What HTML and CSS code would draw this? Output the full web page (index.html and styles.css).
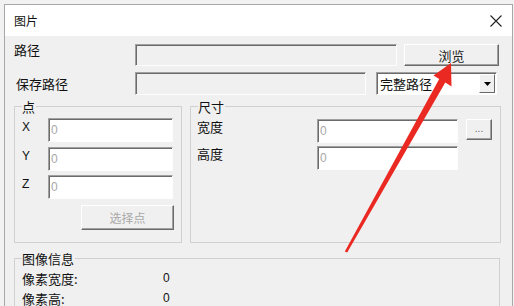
FILE: index.html
```html
<!DOCTYPE html>
<html lang="zh">
<head>
<meta charset="utf-8">
<link rel="stylesheet" href="styles.css">
</head>
<body>
<div class="window">
  <div class="titlebar">
    <span class="title">图片</span>
    <svg class="close" width="12" height="12" viewBox="0 0 12 12"><path d="M0.5 0.5 L11.5 11.5 M11.5 0.5 L0.5 11.5" stroke="#222" stroke-width="1.1" fill="none"/></svg>
  </div>
  <div class="content">
    <div class="row row1">
      <span class="label">路径</span>
      <div class="field readonly path1"></div>
      <div class="btn browse">浏览</div>
    </div>
    <div class="row row2">
      <span class="label label2">保存路径</span>
      <div class="field readonly path2"></div>
      <div class="field combo"><span class="combo-text">完整路径</span><span class="combo-btn"><svg width="7" height="4" viewBox="0 0 7 4"><path d="M0 0 H7 L3.5 4 Z" fill="#000"/></svg></span></div>
    </div>
    <div class="groups">
      <div class="group g-point">
        <span class="legend">点</span>
        <div class="pgrid">
          <span class="axis">X</span><div class="field white w125"><span class="ph">0</span></div>
          <span class="axis">Y</span><div class="field white w125"><span class="ph">0</span></div>
          <span class="axis">Z</span><div class="field white w125"><span class="ph">0</span></div>
        </div>
        <div class="btn disabled pick">选择点</div>
      </div>
      <div class="group g-size">
        <span class="legend">尺寸</span>
        <div class="srow">
          <span class="slabel">宽度</span><div class="field white w141"><span class="ph">0</span></div><div class="btn dots">...</div>
        </div>
        <div class="srow">
          <span class="slabel">高度</span><div class="field white w141"><span class="ph">0</span></div>
        </div>
      </div>
    </div>
    <div class="group g-info">
      <span class="legend">图像信息</span>
      <div class="irow"><span class="ilabel">像素宽度:</span><span class="ival">0</span></div>
      <div class="irow"><span class="ilabel">像素高:</span><span class="ival">0</span></div>
    </div>
  </div>
</div>
<svg class="arrow" width="514" height="306" viewBox="0 0 514 306">
  <polygon fill="#ea2a22" points="451,63 451.5,86.5 445.3,82.5 347.2,252.6 344.8,251.4 439.2,79 433.5,75.5"/>
</svg>
</body>
</html>
```
FILE: styles.css
```css
html, body {
  margin: 0;
  padding: 0;
}
body {
  background: #f2f2f2;
  width: 514px;
  height: 306px;
  overflow: hidden;
  position: relative;
  font-family: "Noto Sans CJK SC", "Noto Sans", sans-serif;
  font-size: 13px;
  color: #111;
}
.window {
  margin: 4px 1px 0 4px;
  border: 1px solid #a8a8a8;
  border-bottom: none;
  background: #f0f0f0;
  height: 301px;
  overflow: hidden;
}
.titlebar {
  height: 31px;
  background: #fff;
  display: flex;
  align-items: center;
  justify-content: space-between;
  padding: 0 10px 0 9px;
}
.title {
  font-size: 12px;
  line-height: 16px;
}
.close {
  display: block;
  margin-top: 1px;
}
.content {
  padding: 8px 0 0 9px;
}
.row {
  display: flex;
  align-items: stretch;
}
.row1 {
  height: 22px;
}
.row2 {
  height: 23px;
  margin-top: 6px;
}
.label {
  width: 121px;
  line-height: 14px;
  margin-top: -1px;
}
.label2 {
  width: 119px;
  padding-left: 2px;
  line-height: 22px;
  margin-top: 1px;
}
.field {
  box-sizing: border-box;
  border-top: 1px solid #a0a0a0;
  border-left: 1px solid #a0a0a0;
  border-right: 1px solid #fdfdfd;
  border-bottom: 1px solid #fdfdfd;
  box-shadow: inset 1px 1px 0 #6b6b6b;
}
.readonly {
  background: #f0f0f0;
}
.white {
  background: #fff;
}
.path1 {
  width: 262px;
}
.path2 {
  width: 231px;
  margin-right: 10px;
}
.combo {
  width: 121px;
  background: #fff;
  display: flex;
  align-items: center;
  justify-content: space-between;
  padding: 0 1px 0 3px;
}
.combo-text {
  font-size: 13px;
  line-height: 18px;
}
.combo-btn {
  width: 16px;
  height: 19px;
  box-sizing: border-box;
  background: #f0f0f0;
  border-top: 1px solid #fff;
  border-left: 1px solid #fff;
  border-right: 1px solid #696969;
  border-bottom: 1px solid #696969;
  display: flex;
  align-items: center;
  justify-content: center;
}
.combo-btn svg {
  display: block;
}
.btn {
  box-sizing: border-box;
  background: #f0f0f0;
  border-top: 1px solid #fff;
  border-left: 1px solid #fff;
  border-right: 1px solid #6b6b6b;
  border-bottom: 1px solid #6b6b6b;
  box-shadow: inset -1px -1px 0 #a0a0a0;
  display: flex;
  align-items: center;
  justify-content: center;
  font-size: 12px;
}
.browse {
  width: 95px;
  margin-left: 7px;
  color: #222;
  font-size: 13px;
}
.groups {
  display: flex;
  gap: 8px;
  margin-top: 11px;
}
.group {
  position: relative;
  box-sizing: border-box;
  border: 1px solid #d0d0d0;
}
.legend {
  position: absolute;
  top: -10px;
  left: 7px;
  line-height: 19px;
  background: #f0f0f0;
  padding-right: 1px;
}
.g-point {
  width: 168px;
  height: 137px;
  padding: 11px 0 0 7px;
}
.pgrid {
  display: grid;
  grid-template-columns: 26px 125px;
  grid-auto-rows: 24px;
  row-gap: 4.5px;
  align-items: center;
}
.axis {
  font-family: "Liberation Sans", sans-serif;
  font-size: 12px;
  margin-top: -6px;
}
.w125 {
  width: 125px;
  height: 24px;
}
.w141 {
  width: 141px;
  height: 24px;
}
.ph {
  font-family: "Liberation Sans", sans-serif;
  color: #a8a8a8;
  font-size: 12px;
  line-height: 22px;
  padding-left: 2px;
}
.pick {
  width: 93px;
  height: 25px;
  margin: 6px 0 0 59px;
  color: #a8a8a8;
}
.g-size {
  width: 311px;
  height: 137px;
  padding: 12px 0 0 6px;
}
.srow {
  display: flex;
  align-items: flex-start;
  height: 24px;
  margin-bottom: 3px;
}
.slabel {
  width: 120px;
  line-height: 14px;
  margin-top: 1px;
}
.dots {
  width: 26px;
  height: 21px;
  margin-left: 8px;
  font-family: "Liberation Sans", sans-serif;
  font-size: 10px;
  color: #666;
  padding-bottom: 3px;
}
.g-info {
  width: 486px;
  height: 70px;
  margin-top: 15px;
  padding: 9px 0 0 7px;
}
.irow {
  display: flex;
  height: 20px;
  align-items: center;
}
.ilabel {
  width: 141px;
}
.ival {
  font-family: "Liberation Sans", sans-serif;
  font-size: 12px;
}
.arrow {
  position: absolute;
  left: 0;
  top: 0;
  pointer-events: none;
}
```
